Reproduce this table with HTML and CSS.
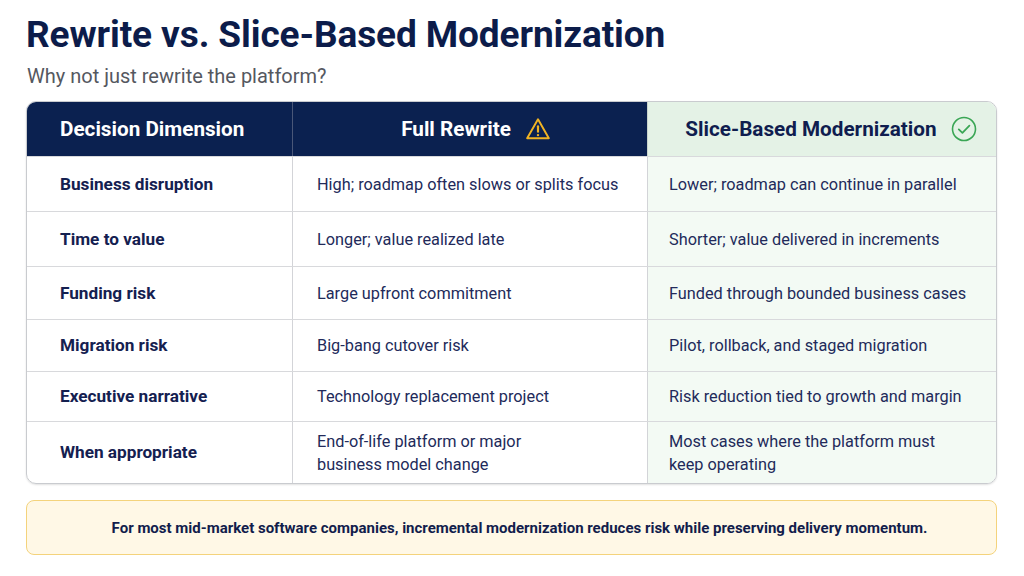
FILE: index.html
```html
<!DOCTYPE html>
<html lang="en">
<head>
<meta charset="utf-8">
<title>Rewrite vs. Slice-Based Modernization</title>
<link rel="stylesheet" href="styles.css">
</head>
<body>
<main class="page">
  <h1 class="title">Rewrite vs. Slice-Based Modernization</h1>
  <p class="subtitle">Why not just rewrite the platform?</p>

  <div class="table">
    <div class="row head">
      <div class="cell c1">Decision Dimension</div>
      <div class="cell c2">Full Rewrite
        <svg class="icon" viewBox="0 0 24 24" width="26" height="26" aria-hidden="true">
          <path d="M12 3 L22 20.5 H2 Z" fill="none" stroke="#f0b323" stroke-width="1.8" stroke-linejoin="round"/>
          <path d="M12 9.5 V14.5" stroke="#f0b323" stroke-width="2" stroke-linecap="round"/>
          <circle cx="12" cy="17.6" r="1.1" fill="#f0b323"/>
        </svg>
      </div>
      <div class="cell c3">Slice-Based Modernization
        <svg class="icon" viewBox="0 0 26 26" width="26" height="26" aria-hidden="true">
          <circle cx="13" cy="13" r="11.5" fill="none" stroke="#3aa655" stroke-width="1.6"/>
          <path d="M7.8 13.4 L11.4 16.8 L18.4 9.6" fill="none" stroke="#3aa655" stroke-width="1.8" stroke-linecap="round" stroke-linejoin="round"/>
        </svg>
      </div>
    </div>
    <div class="row r1">
      <div class="cell c1">Business disruption</div>
      <div class="cell c2">High; roadmap often slows or splits focus</div>
      <div class="cell c3">Lower; roadmap can continue in parallel</div>
    </div>
    <div class="row r2">
      <div class="cell c1">Time to value</div>
      <div class="cell c2">Longer; value realized late</div>
      <div class="cell c3">Shorter; value delivered in increments</div>
    </div>
    <div class="row r3">
      <div class="cell c1">Funding risk</div>
      <div class="cell c2">Large upfront commitment</div>
      <div class="cell c3">Funded through bounded business cases</div>
    </div>
    <div class="row r4">
      <div class="cell c1">Migration risk</div>
      <div class="cell c2">Big-bang cutover risk</div>
      <div class="cell c3">Pilot, rollback, and staged migration</div>
    </div>
    <div class="row r5">
      <div class="cell c1">Executive narrative</div>
      <div class="cell c2">Technology replacement project</div>
      <div class="cell c3">Risk reduction tied to growth and margin</div>
    </div>
    <div class="row r6">
      <div class="cell c1">When appropriate</div>
      <div class="cell c2">End-of-life platform or major<br>business model change</div>
      <div class="cell c3">Most cases where the platform must<br>keep operating</div>
    </div>
  </div>

  <div class="callout">For most mid-market software companies, incremental modernization reduces risk while preserving delivery momentum.</div>
</main>
</body>
</html>
```

FILE: styles.css
```css
* { box-sizing: border-box; }
html, body { margin: 0; padding: 0; background: #ffffff; }
body { font-family: Roboto, "Noto Sans", sans-serif; color: #1b2356; }

.page {
  width: 1024px;
  height: 576px;
  padding: 13px 27px 0 26px;
  display: flex;
  flex-direction: column;
}

.title {
  margin: 0;
  font-size: 37px;
  line-height: 44px;
  font-weight: 700;
  color: #0c1c4a;
  letter-spacing: -0.1px;
}

.subtitle {
  margin: 7px 0 0 1px;
  font-size: 20px;
  line-height: 25px;
  color: #55585f;
}

.table {
  margin-top: 12px;
  border: 1px solid #c9cbcf;
  border-radius: 10px;
  overflow: hidden;
  display: flex;
  flex-direction: column;
  box-shadow: 0 1px 2px rgba(0,0,0,0.12);
}

.row {
  display: grid;
  grid-template-columns: 265px 355px 1fr;
  border-top: 1px solid #d8d9dc;
}
.row.head { border-top: none; height: 54px; }
.r1, .r2 { height: 55px; }
.r3 { height: 53px; }
.r4 { height: 52px; }
.r5 { height: 50px; }
.r6 { height: 62px; }

.cell {
  display: flex;
  align-items: center;
  font-size: 16.3px;
  line-height: 23px;
  border-left: 1px solid #d3d4d8;
}
.cell.c1 {
  border-left: none;
  padding-left: 33px;
  font-weight: 700;
  font-size: 17.2px;
  color: #142050;
}
.cell.c2 { padding-left: 24px; color: #222a5a; }
.cell.c3 { padding-left: 21px; background: #f3faf4; color: #222a5a; }

.head .cell { font-weight: 700; font-size: 20.7px; }
.head .c1, .head .c2 { background: #0b2150; color: #ffffff; }
.head .c2 { justify-content: center; padding-left: 12px; gap: 14px; border-left-color: #4a5778; }
.head .c3 { background: #e4f2e6; color: #0f1d4f; justify-content: center; padding-left: 18px; gap: 14px; border-left-color: #c9d4cc; }
.icon { flex: none; }

.callout {
  margin-top: 16px;
  height: 55px;
  padding-left: 16px;
  border: 1.5px solid #f4d37c;
  border-radius: 8px;
  background: #fff8e6;
  display: flex;
  align-items: center;
  justify-content: center;
  font-size: 15px;
  font-weight: 700;
  color: #121d4c;
}
```
